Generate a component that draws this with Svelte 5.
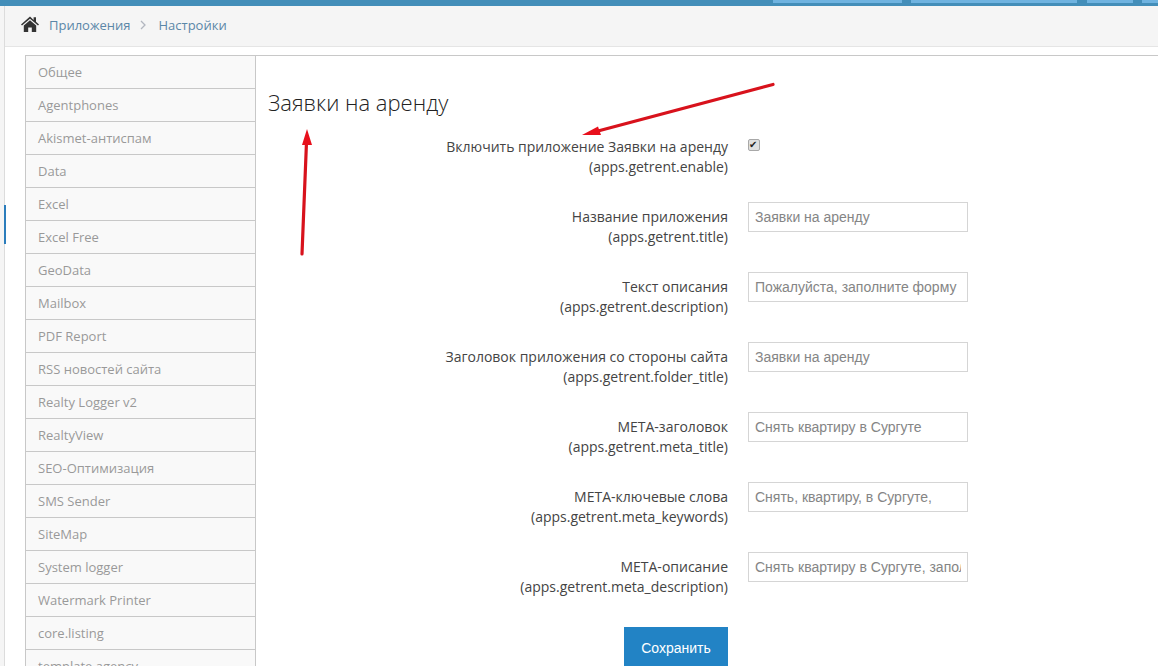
<script>
  const tabs = ['Общее','Agentphones','Akismet-антиспам','Data','Excel','Excel Free','GeoData','Mailbox','PDF Report','RSS новостей сайта','Realty Logger v2','RealtyView','SEO-Оптимизация','SMS Sender','SiteMap','System logger','Watermark Printer','core.listing','template.agency'];
  const fields = [
    { label: 'Название приложения', key: 'apps.getrent.title', value: 'Заявки на аренду' },
    { label: 'Текст описания', key: 'apps.getrent.description', value: 'Пожалуйста, заполните форму' },
    { label: 'Заголовок приложения со стороны сайта', key: 'apps.getrent.folder_title', value: 'Заявки на аренду' },
    { label: 'META-заголовок', key: 'apps.getrent.meta_title', value: 'Снять квартиру в Сургуте' },
    { label: 'META-ключевые слова', key: 'apps.getrent.meta_keywords', value: 'Снять, квартиру, в Сургуте,' },
    { label: 'META-описание', key: 'apps.getrent.meta_description', value: 'Снять квартиру в Сургуте, заполните форму' }
  ];
</script>

<div class="page">
  <header class="navbar">
    <span class="nav-tab t1"></span>
    <span class="nav-tab t2"></span>
    <span class="nav-tab t3"></span>
    <span class="nav-tab t4"></span>
  </header>
  <div class="shell">
    <aside class="rail"><span class="rail-mark"></span></aside>
    <main class="main">
      <nav class="crumbs">
        <svg class="home" viewBox="0 0 18 16" width="18" height="16" aria-hidden="true">
          <path fill="#333" d="M9 .6 0 8.400l1 1.200L9 2.800l8 6.800 1-1.200-3-2.600V1.200h-2.400v2.700L9 .6Z"/>
          <path fill="#333" d="M9 4.200 2.800 9.500V16h4.400v-4.400h3.600V16h4.400V9.500L9 4.200Z"/>
        </svg>
        <a href="#a">Приложения</a>
        <svg class="sep" viewBox="0 0 6 10" width="6" height="10" aria-hidden="true"><path d="M1 1l4 4-4 4" fill="none" stroke="#b2b6bf" stroke-width="1.300"/></svg>
        <a href="#b">Настройки</a>
      </nav>
      <div class="body">
        <ul class="tabs">
          {#each tabs as tab}<li>{tab}</li>{/each}
        </ul>
        <section class="pane">
          <h1>Заявки на аренду</h1>
          <form class="form">
            <div class="row check-row">
              <div class="label">Включить приложение Заявки на аренду<br />(apps.getrent.enable)</div>
              <div class="control"><input type="checkbox" checked /></div>
            </div>
            {#each fields as f}
              <div class="row">
                <div class="label">{f.label}<br />({f.key})</div>
                <div class="control"><input type="text" value={f.value} /></div>
              </div>
            {/each}
            <div class="actions"><button type="button">Сохранить</button></div>
          </form>
        </section>
      </div>
    </main>
  </div>
  <svg class="arrows" viewBox="0 0 1158 666" width="1158" height="666" aria-hidden="true">
    <path d="M773 84.500 598 131" stroke="#d8121c" stroke-width="3.200" stroke-linecap="round" fill="none"/>
    <path d="M582 135 598 126.500 601 135Z" fill="#e8101c"/>
    <path d="M302 254 306.500 142" stroke="#d8121c" stroke-width="3.200" stroke-linecap="round" fill="none"/>
    <path d="M307 129 312 145 302 145Z" fill="#e8101c"/>
  </svg>
</div>

<style>
  :global(body) {
    margin: 0;
    background: #fff;
    overflow: hidden;
  }
  .page {
    position: relative;
    width: 1158px;
    height: 666px;
    overflow: hidden;
    font-family: "Open Sans", "Liberation Sans", sans-serif;
    font-size: 14px;
    color: #393939;
  }
  .navbar {
    position: relative;
    height: 6px;
    background: #438eb9;
  }
  .nav-tab {
    position: absolute;
    top: 0;
    height: 3px;
    background: #6fb3e0;
  }
  .t1 { left: 773px; width: 129px; }
  .t2 { left: 911px; width: 166px; }
  .t3 { left: 1087px; width: 46px; }
  .t4 { left: 1142px; width: 16px; }
  .shell {
    display: flex;
    height: 660px;
  }
  .rail {
    position: relative;
    width: 4px;
    background: #f5f5f5;
    border-right: 1px solid #dcdcdc;
    flex: none;
  }
  .rail-mark {
    position: absolute;
    top: 199px;
    right: -2px;
    width: 2px;
    height: 39px;
    background: #2b7dbc;
  }
  .main {
    flex: 1;
    min-width: 0;
  }
  .crumbs {
    display: flex;
    align-items: center;
    height: 41px;
    box-sizing: border-box;
    padding-left: 16px;
    padding-bottom: 2px;
    background: #f5f5f5;
    border-bottom: 1px solid #e5e5e5;
    font-size: 13px;
  }
  .home { margin-right: 10px; margin-top: -3px; }
  .crumbs a {
    color: #5b87a8;
    text-decoration: none;
  }
  .sep { margin: 0 13px 0 9px; }
  .body {
    display: flex;
    padding: 8px 0 0 20px;
  }
  .tabs {
    list-style: none;
    margin: 0;
    padding: 0;
    width: 231px;
    flex: none;
    box-sizing: border-box;
    border-left: 1px solid #c8c8c8;
    border-top: 1px solid #c8c8c8;
  }
  .tabs li {
    height: 33px;
    box-sizing: border-box;
    padding: 7px 0 0 12px;
    line-height: 18px;
    font-size: 13px;
    color: #999;
    background: #f9f9f9;
    border-bottom: 1px solid #c8c8c8;
    border-right: 1px solid #c8c8c8;
  }
  .pane {
    flex: 1;
    min-width: 0;
    border-top: 1px solid #c8c8c8;
    padding: 33px 0 0 12px;
  }
  h1 {
    margin: 0;
    font-size: 22px;
    line-height: 27px;
    font-weight: 300;
    color: #222;
  }
  .form {
    margin-top: 16px;
    margin-left: -12px;
  }
  .row {
    display: flex;
    height: 70px;
    box-sizing: border-box;
  }
  .label {
    width: 472px;
    flex: none;
    text-align: right;
    line-height: 20px;
    padding-top: 5px;
    white-space: nowrap;
    color: #444;
  }
  .control {
    margin-left: 20px;
  }
  input[type="text"] {
    display: block;
    width: 220px;
    height: 30px;
    box-sizing: border-box;
    padding: 5px 6px 5px 6px;
    border: 1px solid #d5d5d5;
    border-radius: 0;
    background: #fff;
    color: #858585;
    font-family: "Liberation Sans", Arial, sans-serif;
    font-size: 14px;
  }
  input[type="checkbox"] {
    appearance: none;
    position: relative;
    display: block;
    width: 12px;
    height: 12px;
    box-sizing: border-box;
    margin: 7px 0 0;
    border: 1px solid #a8a8a8;
    border-radius: 2px;
    background: #e0e0e0;
  }
  input[type="checkbox"]::after {
    content: "✔";
    position: absolute;
    left: 0;
    top: -1px;
    font-family: "DejaVu Sans", sans-serif;
    font-size: 10px;
    font-weight: 700;
    line-height: 11px;
    color: #222;
  }
  .actions {
    padding-left: 368px;
    margin-top: 5px;
  }
  button {
    display: block;
    width: 104px;
    height: 42px;
    border: 0;
    background: #2283c5;
    color: #fff;
    font-family: "Liberation Sans", Arial, sans-serif;
    font-size: 14px;
    padding: 0;
  }
  .arrows {
    position: absolute;
    inset: 0;
    pointer-events: none;
  }
</style>
